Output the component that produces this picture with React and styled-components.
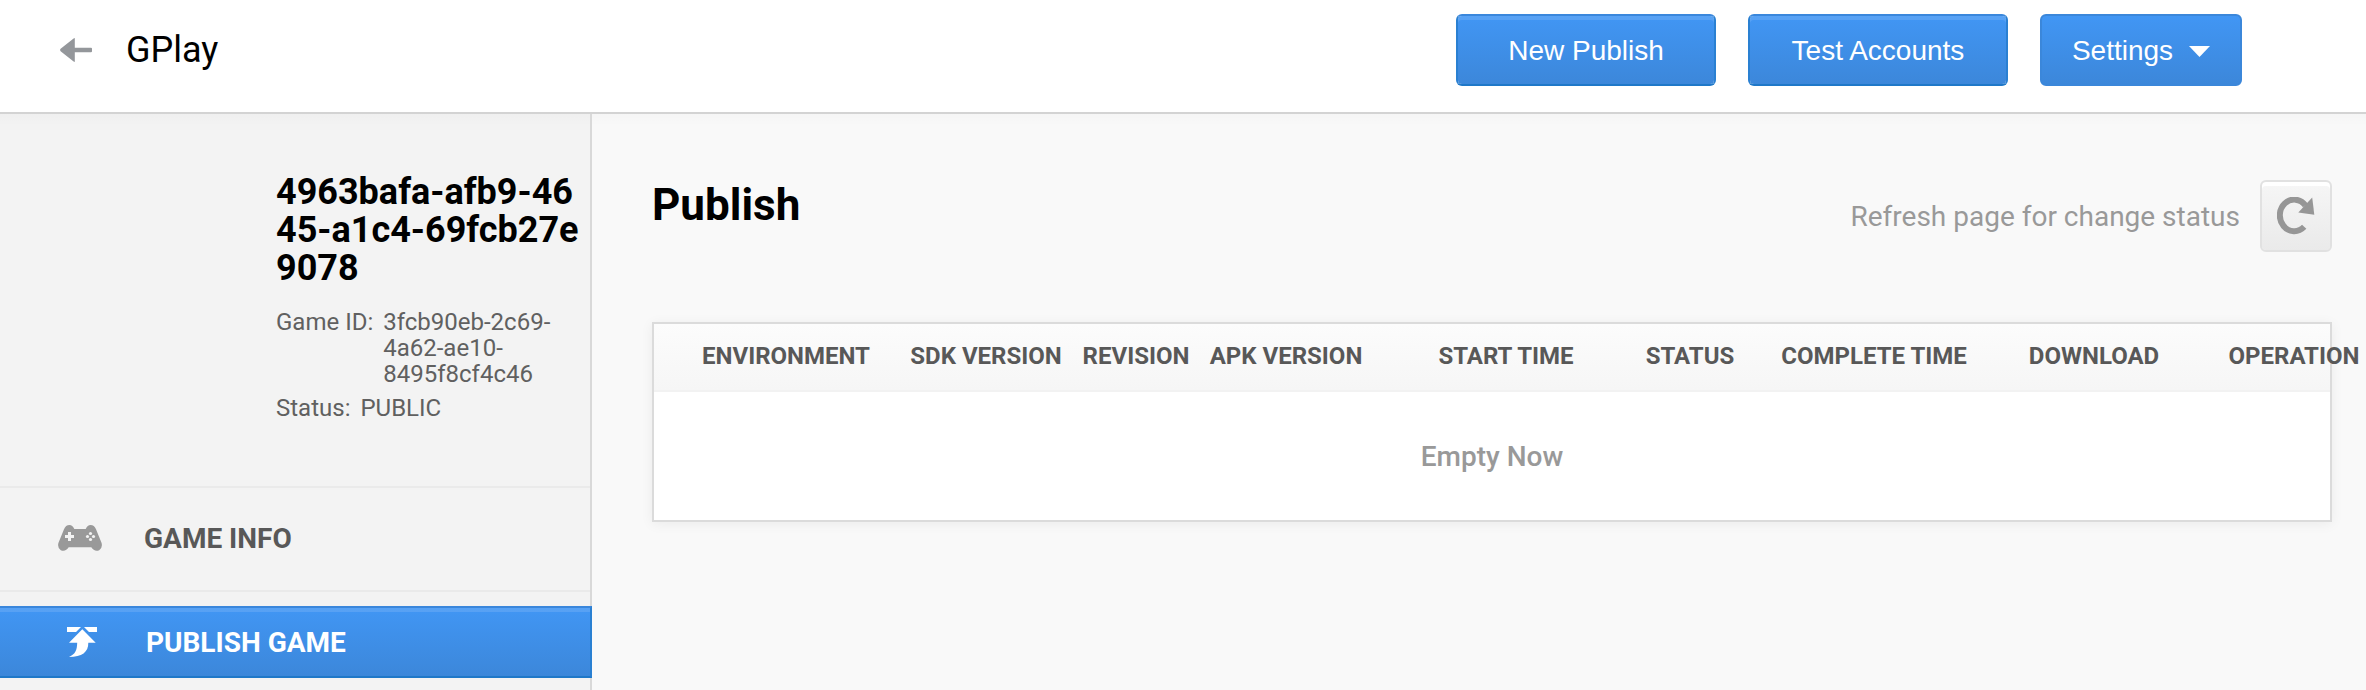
import React from 'react';
import styled, { createGlobalStyle, css } from 'styled-components';

const Global = createGlobalStyle`
  *, *::before, *::after { box-sizing: border-box; }
  body { margin: 0; font-family: Roboto, sans-serif; background: #f9f9f9; color: #000; overflow: hidden; }
  h1, h2, p, dl, dt, dd { margin: 0; }
`;

const Page = styled.div`
  display: flex;
  flex-direction: column;
  width: 2366px;
  height: 690px;
  overflow: hidden;
`;

const Header = styled.header`
  display: flex;
  align-items: flex-start;
  height: 114px;
  flex: none;
  padding: 14px 124px 0 60px;
  background: #fff;
  border-bottom: 2px solid #d3d3d3;
`;

const BackLink = styled.a`
  display: flex;
  padding-top: 24px;
  color: #94979b;
`;

const AppName = styled.span`
  margin: 15px auto 0 34px;
  font-size: 36px;
  line-height: 42px;
`;

const Actions = styled.div`
  display: flex;
  gap: 32px;
`;

const blueSurface = css`
  color: #fff;
  background: linear-gradient(#4196f4, #3c87da);
`;

const Button = styled.button`
  ${blueSurface}
  display: flex;
  align-items: center;
  justify-content: center;
  gap: 16px;
  width: ${(p) => p.$width}px;
  height: 72px;
  padding: 1px 0 0;
  border: 2px solid;
  border-color: ${(p) => (p.$flat ? '#3b87da' : '#3a87dc #2a80d2 #1f78c8')};
  border-radius: 6px;
  background-clip: ${(p) => (p.$flat ? 'border-box' : 'padding-box')};
  box-shadow: ${(p) => (p.$flat ? 'none' : 'inset 0 4px 0 rgba(255,255,255,.12)')};
  font: 28px/31px "Liberation Sans", Arial, sans-serif;
  svg { margin-top: 2px; }
`;

const Body = styled.div`
  display: flex;
  flex: 1;
  min-height: 0;
  background: linear-gradient(rgba(0,0,0,.014), rgba(0,0,0,0) 12px), #f9f9f9;
`;

const Sidebar = styled.aside`
  display: flex;
  flex-direction: column;
  flex: none;
  width: 592px;
  background: linear-gradient(rgba(0,0,0,.014), rgba(0,0,0,0) 12px), #f3f3f3;
  border-right: 2px solid #d9d9d9;
`;

const GameCard = styled.section`
  height: 372px;
  flex: none;
  padding: 59px 10px 0 276px;
`;

const GameTitle = styled.h2`
  font-size: 36px;
  line-height: 38px;
  font-weight: 700;
  word-break: break-all;
`;

const Meta = styled.dl`
  display: flex;
  flex-direction: column;
  gap: 8px;
  margin-top: 22px;
  font-size: 24px;
  line-height: 26px;
  color: #606060;
`;

const MetaRow = styled.div`
  display: flex;
  gap: 10px;
  dt { flex: none; }
  dd { max-width: 180px; }
`;

const NavItem = styled.a`
  display: flex;
  align-items: center;
  flex: none;
  font-size: 28px;
  line-height: 34px;
  font-weight: 700;
  color: #585858;
  height: 106px;
  padding-left: 58px;
  gap: 42px;
  border: 2px solid #eaeaea;
  border-width: 2px 0;
  svg { margin-bottom: 2px; }
`;

const ActiveNavItem = styled(NavItem)`
  ${blueSurface}
  height: 72px;
  margin: 14px -2px 0 0;
  padding: 2px 0 0 67px;
  gap: 48px;
  border-width: 2px 2px 2px 0;
  border-color: #3a87dc #2a80d2 #1f78c8;
  box-shadow: inset 0 4px 0 rgba(255,255,255,.12);
`;

const Main = styled.main`
  flex: none;
  width: 1774px;
  padding: 66px 0 0 60px;
`;

const TitleRow = styled.div`
  display: flex;
  justify-content: space-between;
  width: 1680px;
  height: 142px;
`;

const Title = styled.h1`
  margin-top: -1px;
  font-size: 44px;
  line-height: 52px;
  font-weight: 700;
`;

const RefreshGroup = styled.div`
  display: flex;
  align-items: center;
  gap: 20px;
  height: 72px;
  color: #999;
`;

const RefreshHint = styled.span`
  padding-top: 1px;
  font-size: 28px;
  line-height: 33px;
`;

const RefreshButton = styled.button`
  display: flex;
  align-items: center;
  justify-content: center;
  width: 72px;
  height: 72px;
  padding: 0 0 1px;
  border: 2px solid #e1e1e1;
  border-radius: 6px;
  background: linear-gradient(#f6f6f6, #eaeaea) padding-box;
  box-shadow: inset 0 4px 0 #fff;
  color: #969696;
`;

const Table = styled.section`
  width: 1680px;
  height: 200px;
  border: 2px solid #dbdbdb;
  background: #fff;
  box-shadow: 0 2px 12px rgba(0,0,0,.06);
`;

const TableHead = styled.div`
  display: flex;
  height: 68px;
  padding: 0 0 2px 32px;
  border-bottom: 2px solid #f2f2f2;
  background: linear-gradient(#fcfcfc, #f6f6f6);
`;

const HeadCell = styled.div`
  display: flex;
  align-items: center;
  justify-content: center;
  flex: none;
  width: ${(p) => p.$width}px;
  font-size: 24px;
  line-height: 28px;
  font-weight: 700;
  white-space: nowrap;
  color: #585858;
`;

const Empty = styled.p`
  height: 128px;
  line-height: 129px;
  text-align: center;
  font-size: 28px;
  font-weight: 500;
  color: #999;
`;

const columns = [
  ['ENVIRONMENT', 200],
  ['SDK VERSION', 200],
  ['REVISION', 100],
  ['APK VERSION', 200],
  ['START TIME', 240],
  ['STATUS', 128],
  ['COMPLETE TIME', 240],
  ['DOWNLOAD', 200],
  ['OPERATION', 200],
];

const BackIcon = () => (
  <svg width="32" height="24" viewBox="0 0 32 24" fill="currentColor">
    <path d="M14.8 0V9.8H31a1 1 0 0 1 1 1v2.4a1 1 0 0 1-1 1H14.8V24L13.6 23.6 0.6 13.2Q-0.4 12 0.6 10.8L13.6 0.4Z" />
  </svg>
);

const CaretIcon = () => (
  <svg width="21" height="11" viewBox="0 0 21 11" fill="currentColor">
    <path d="M0 0H21L10.5 11Z" />
  </svg>
);

const RefreshIcon = () => (
  <svg width="38" height="38" viewBox="0 0 38 38">
    <path d="M27.2 29.8A14.4 15.8 0 1 1 28.4 8.4" fill="none" stroke="currentColor" strokeWidth="6" />
    <path d="M35.2 0.5L37.3 17.7L21.3 15.4Z" fill="currentColor" />
  </svg>
);

const GamepadIcon = () => (
  <svg width="44" height="26" viewBox="0 0 44 26">
    <path
      d="M6 4.3Q7.6 0 11.5 0Q14.5 0 16.3 4H27.7Q29.5 0 32.5 0Q36.4 0 38 4.3L43.6 18Q44.8 23 41.2 25.2Q36.5 27.2 33.3 22.3H10.7Q7.5 27.2 2.8 25.2Q-0.8 23 0.4 18Z"
      fill="#999"
    />
    <path d="M10 7h3v3h3v3h-3v3h-3v-3h-3v-3h3Z" fill="#f3f3f3" />
    <g fill="#f3f3f3">
      <circle cx="32.5" cy="8.5" r="1.6" />
      <circle cx="32.5" cy="14.5" r="1.6" />
      <circle cx="29.5" cy="11.5" r="1.6" />
      <circle cx="35.5" cy="11.5" r="1.6" />
    </g>
  </svg>
);

const PublishIcon = () => (
  <svg width="31" height="30" viewBox="0 0 31 30" fill="currentColor">
    <path d="M0 0H14L9 5H0ZM17 0H30V5H22Z" />
    <path d="M15.3 2.2L28.7 15.7H21.3C21.5 25 15 30 2 30C8.5 27 10 23 10.2 15.7H2Z" />
  </svg>
);

export default function App() {
  return (
    <Page>
      <Global />
      <Header>
        <BackLink aria-label="Back"><BackIcon /></BackLink>
        <AppName>GPlay</AppName>
        <Actions>
          <Button $width={260}>New Publish</Button>
          <Button $width={260}>Test Accounts</Button>
          <Button $width={202} $flat>Settings<CaretIcon /></Button>
        </Actions>
      </Header>
      <Body>
        <Sidebar>
          <GameCard>
            <GameTitle>4963bafa-afb9-4645-a1c4-69fcb27e9078</GameTitle>
            <Meta>
              <MetaRow><dt>Game ID:</dt><dd>3fcb90eb-2c69-4a62-ae10-8495f8cf4c46</dd></MetaRow>
              <MetaRow><dt>Status:</dt><dd>PUBLIC</dd></MetaRow>
            </Meta>
          </GameCard>
          <NavItem><GamepadIcon />GAME INFO</NavItem>
          <ActiveNavItem><PublishIcon />PUBLISH GAME</ActiveNavItem>
        </Sidebar>
        <Main>
          <TitleRow>
            <Title>Publish</Title>
            <RefreshGroup>
              <RefreshHint>Refresh page for change status</RefreshHint>
              <RefreshButton aria-label="Refresh"><RefreshIcon /></RefreshButton>
            </RefreshGroup>
          </TitleRow>
          <Table>
            <TableHead>
              {columns.map(([label, width]) => (
                <HeadCell key={label} $width={width}>{label}</HeadCell>
              ))}
            </TableHead>
            <Empty>Empty Now</Empty>
          </Table>
        </Main>
      </Body>
    </Page>
  );
}
